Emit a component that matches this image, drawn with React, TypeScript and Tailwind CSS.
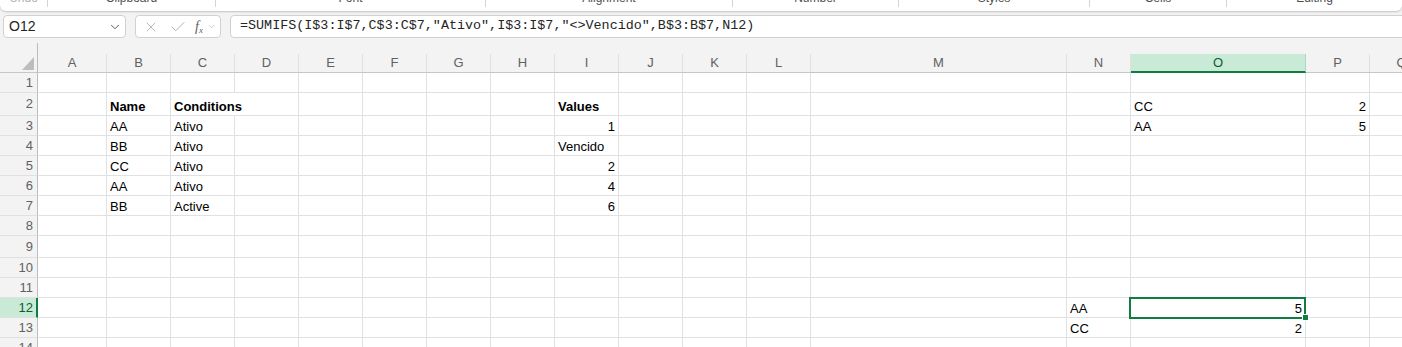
import { Check, ChevronDown, X } from 'lucide-react';

type Cell = { v: string; bold?: boolean; num?: boolean };

const ribbonGroups = [
  { label: 'Undo', width: 'w-[48px]', muted: true },
  { label: 'Clipboard', width: 'w-[168px]' },
  { label: 'Font', width: 'w-[270px]' },
  { label: 'Alignment', width: 'w-[247px]' },
  { label: 'Number', width: 'w-[166px]' },
  { label: 'Styles', width: 'w-[191px]' },
  { label: 'Cells', width: 'w-[137px]' },
  { label: 'Editing', width: 'flex-1' },
];

const columns = [
  { key: 'A', width: 'w-[69px]' },
  { key: 'B', width: 'w-[64px]' },
  { key: 'C', width: 'w-[64px]' },
  { key: 'D', width: 'w-[64px]' },
  { key: 'E', width: 'w-[64px]' },
  { key: 'F', width: 'w-[64px]' },
  { key: 'G', width: 'w-[64px]' },
  { key: 'H', width: 'w-[64px]' },
  { key: 'I', width: 'w-[64px]' },
  { key: 'J', width: 'w-[64px]' },
  { key: 'K', width: 'w-[64px]' },
  { key: 'L', width: 'w-[64px]' },
  { key: 'M', width: 'w-[256px]' },
  { key: 'N', width: 'w-[64px]' },
  { key: 'O', width: 'w-[175px]' },
  { key: 'P', width: 'w-[64px]' },
  { key: 'Q', width: 'w-[64px]' },
];

const rows = [
  { n: 1, height: 'h-[20px]' },
  { n: 2, height: 'h-[23px]' },
  { n: 3, height: 'h-[20px]' },
  { n: 4, height: 'h-[20px]' },
  { n: 5, height: 'h-[20px]' },
  { n: 6, height: 'h-[20px]' },
  { n: 7, height: 'h-[20px]' },
  { n: 8, height: 'h-[20px]' },
  { n: 9, height: 'h-[22px]' },
  { n: 10, height: 'h-[20px]' },
  { n: 11, height: 'h-[20px]' },
  { n: 12, height: 'h-[20px]' },
  { n: 13, height: 'h-[20px]' },
  { n: 14, height: 'h-[20px]' },
];

const cells: Record<string, Cell> = {
  B2: { v: 'Name', bold: true },
  C2: { v: 'Conditions', bold: true },
  I2: { v: 'Values', bold: true },
  O2: { v: 'CC' },
  P2: { v: '2', num: true },
  B3: { v: 'AA' },
  C3: { v: 'Ativo' },
  I3: { v: '1', num: true },
  O3: { v: 'AA' },
  P3: { v: '5', num: true },
  B4: { v: 'BB' },
  C4: { v: 'Ativo' },
  I4: { v: 'Vencido' },
  B5: { v: 'CC' },
  C5: { v: 'Ativo' },
  I5: { v: '2', num: true },
  B6: { v: 'AA' },
  C6: { v: 'Ativo' },
  I6: { v: '4', num: true },
  B7: { v: 'BB' },
  C7: { v: 'Active' },
  I7: { v: '6', num: true },
  N12: { v: 'AA' },
  O12: { v: '5', num: true },
  N13: { v: 'CC' },
  O13: { v: '2', num: true },
};

// text spills over into D2, so Excel hides that gridline
const overflowing = new Set(['C2']);
const activeCol = 'O';
const activeRow = 12;

export default function App() {
  return (
    <div className="h-[347px] w-[1402px] overflow-hidden bg-[#f3f3f3] font-['Liberation_Sans',Arial,sans-serif]">
      <div className="flex h-[11px] overflow-hidden rounded-b-[6px] bg-white shadow-[0_1px_2px_rgba(0,0,0,0.2)]">
        {ribbonGroups.map((group, i) => (
          <div key={group.label} className={`flex shrink-0 items-start ${group.width}`}>
            <div className={`-mt-[8px] flex-1 text-center text-[12px] leading-[12px] ${group.muted ? 'text-[#b0b0b0]' : 'text-[#505050]'}`}>
              {group.label}
            </div>
            {i < ribbonGroups.length - 1 ? <div className="h-[7px] w-px bg-[#d4d4d4]" /> : null}
          </div>
        ))}
      </div>

      <div className="mt-[4px] flex h-[23px] gap-[9px] pl-[3px]">
        <div className="flex w-[123px] shrink-0 items-center justify-between rounded-[4px] border border-[#d1d1d1] bg-white pl-[5px] pr-[3px] text-[14px] text-[#242424]">
          <span>O12</span>
          <ChevronDown size={14} strokeWidth={1.5} color="#424242" />
        </div>
        <div className="flex w-[86px] shrink-0 items-center rounded-[4px] border border-[#d1d1d1] bg-white pl-[7px]">
          <X size={16} strokeWidth={1.2} color="#a8a8a8" />
          <Check size={18} strokeWidth={1.2} color="#a8a8a8" className="ml-[10px]" />
          <span className="ml-[8px] font-['Liberation_Serif',serif] text-[14px] italic leading-none text-[#616161]">
            f<sub className="text-[9px]">x</sub>
          </span>
          <ChevronDown size={9} strokeWidth={1.5} color="#a8a8a8" className="ml-[4px]" />
        </div>
        <div className="-mr-[10px] flex flex-1 items-center rounded-[4px] border border-[#d1d1d1] bg-white pl-[9px] font-['Liberation_Mono',monospace] text-[13.4px] text-[#242424]">
          =SUMIFS(I$3:I$7,C$3:C$7,"Ativo",I$3:I$7,"&lt;&gt;Vencido",B$3:B$7,N12)
        </div>
      </div>

      <div className="mt-[5px] flex flex-col">
        <div className="flex h-[30px] border-b border-[#c6c6c6]">
          <div className="flex w-[38px] shrink-0 items-end justify-end border-r border-[#bdbdbd] pb-[2px] pr-[3px]">
            <svg width="12" height="13" viewBox="0 0 12 13">
              <path d="M12 0 L12 13 L0 13 Z" fill="#bdbdbd" />
            </svg>
          </div>
          {columns.map((col) => (
            <div key={col.key} className={`flex shrink-0 flex-col justify-end ${col.width}`}>
              {col.key === activeCol ? (
                <div className="relative -mb-px flex h-[19px] items-center justify-center border-b-2 border-r border-b-[#107c41] border-r-[#a9d8bb] bg-[#caead8] text-[13px] text-[#0e5c2f]">
                  {col.key}
                </div>
              ) : (
                <div className="flex h-[18px] items-center justify-center border-r border-[#e0e0e0] text-[13px] text-[#616161]">
                  {col.key}
                </div>
              )}
            </div>
          ))}
        </div>

        {rows.map((row) => (
          <div key={row.n} className={`flex shrink-0 ${row.height}`}>
            {row.n === activeRow ? (
              <div className="flex w-[38px] shrink-0 items-center justify-end border-b border-r-2 border-b-[#e0e0e0] border-r-[#107c41] bg-[#caead8] pr-[3px] text-[13px] text-[#0e5c2f]">
                {row.n}
              </div>
            ) : (
              <div className="flex w-[38px] shrink-0 items-center justify-end border-b border-r border-b-[#e0e0e0] border-r-[#bdbdbd] pr-[4px] text-[13px] text-[#616161]">
                {row.n}
              </div>
            )}
            {columns.map((col) => (
              <GridCell
                key={col.key}
                width={col.width}
                cell={cells[`${col.key}${row.n}`]}
                spill={overflowing.has(`${col.key}${row.n}`)}
                active={col.key === activeCol && row.n === activeRow}
              />
            ))}
          </div>
        ))}
      </div>
    </div>
  );
}

function GridCell({ width, cell, spill, active }: { width: string; cell?: Cell; spill: boolean; active: boolean }) {
  return (
    <div
      className={`flex shrink-0 items-end whitespace-nowrap border-b border-r border-b-[#e1e1e1] bg-white px-[3px] pb-[1px] text-[13px] leading-[15px] text-black ${width} ${spill ? 'border-r-transparent' : 'border-r-[#e1e1e1]'} ${cell?.num ? 'justify-end' : 'justify-start'} ${cell ? 'relative z-10' : ''} ${active ? 'relative z-20' : ''} ${cell?.bold ? 'font-bold' : ''}`}
    >
      {cell?.v}
      {active ? (
        <>
          <div className="absolute -bottom-[2px] -left-[2px] -right-[1px] -top-[1px] border-2 border-[#107c41]" />
          <div className="absolute -bottom-[4px] -right-[4px] h-[7px] w-[7px] border border-white bg-[#107c41]" />
        </>
      ) : null}
    </div>
  );
}
